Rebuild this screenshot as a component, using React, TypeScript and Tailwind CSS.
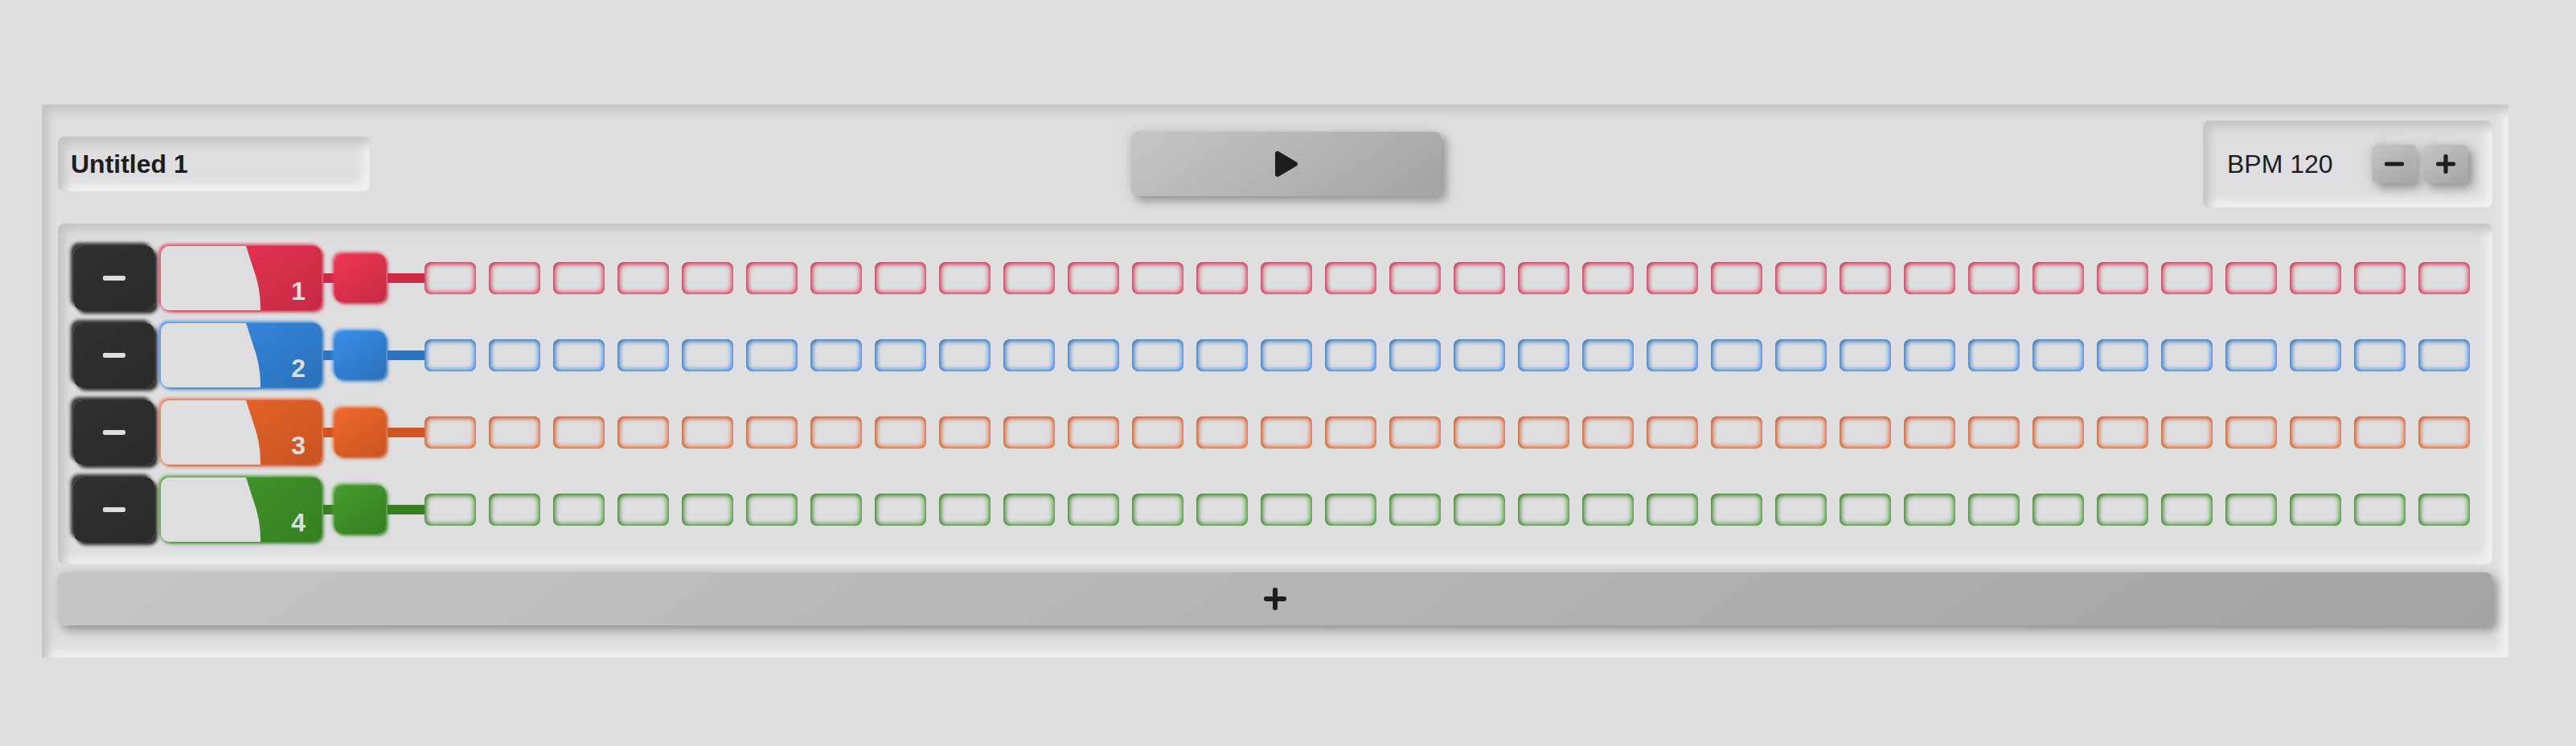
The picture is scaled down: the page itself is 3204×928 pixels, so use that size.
import { useState } from "react";

type Track = {
  id: number;
  raised: string;
  line: string;
  step: string;
};

const TRACKS: Track[] = [
  {
    id: 1,
    raised:
      "bg-linear-[145deg,#ee3655,#c62a45] shadow-[2px_2px_4px_#c42944,-2px_-2px_4px_#f23656]",
    line: "bg-[#cb2b47]",
    step: "shadow-[inset_2px_2px_6px_#be2a45,inset_-2px_-2px_6px_#f03a5e]",
  },
  {
    id: 2,
    raised:
      "bg-linear-[145deg,#388ee9,#2b71ba] shadow-[2px_2px_4px_#2a6eb5,-2px_-2px_4px_#3a92f2]",
    line: "bg-[#2c74c0]",
    step: "shadow-[inset_2px_2px_6px_#2a6eb5,inset_-2px_-2px_6px_#3a92f6]",
  },
  {
    id: 3,
    raised:
      "bg-linear-[145deg,#f0692b,#c95422] shadow-[2px_2px_4px_#c65322,-2px_-2px_4px_#f66c2c]",
    line: "bg-[#ce5623]",
    step: "shadow-[inset_2px_2px_6px_#c2501f,inset_-2px_-2px_6px_#f5692b]",
  },
  {
    id: 4,
    raised:
      "bg-linear-[145deg,#449c2c,#367e22] shadow-[2px_2px_4px_#357b22,-2px_-2px_4px_#45a02c]",
    line: "bg-[#388123]",
    step: "shadow-[inset_2px_2px_6px_#327820,inset_-2px_-2px_6px_#45a32c]",
  },
];

const STEP_COUNT = 32;
const INSET = "shadow-[inset_8px_8px_12px_#c4c4c6,inset_-8px_-8px_12px_#f3f3f5]";
const RAISED =
  "bg-linear-[145deg,#c6c4c7,#a4a3a5] shadow-[6px_6px_12px_#949495,-2px_-2px_16px_#cbc8cb]";

function MinusIcon({ className }: { className: string }) {
  return (
    <svg viewBox="0 0 28 28" className={className} fill="currentColor" aria-hidden="true">
      <rect x="0" y="11" width="28" height="6" rx="2" />
    </svg>
  );
}

function PlusIcon({ className }: { className: string }) {
  return (
    <svg viewBox="0 0 28 28" className={className} fill="currentColor" aria-hidden="true">
      <rect x="0" y="11" width="28" height="6" rx="2.4" />
      <rect x="11" y="0" width="6" height="28" rx="2.4" />
    </svg>
  );
}

function PlayIcon() {
  return (
    <svg viewBox="0 0 28 32" className="h-8 w-7" fill="currentColor" aria-hidden="true">
      <path d="M0 3C0 .7 2.500-.7 4.500.400L26.500 13.400C28.500 14.600 28.500 17.400 26.500 18.600L4.500 31.600C2.500 32.700 0 31.300 0 29Z" />
    </svg>
  );
}

function TrackRow({ track }: { track: Track }) {
  const [active, setActive] = useState<boolean[]>(() => Array(STEP_COUNT).fill(false));
  const toggle = (index: number) =>
    setActive((steps) => steps.map((on, i) => (i === index ? !on : on)));

  return (
    <li className="flex h-24 items-center">
      <button
        type="button"
        aria-label={`Remove track ${track.id}`}
        className="flex h-20 w-[100px] shrink-0 items-center justify-center rounded-[10px] bg-linear-[145deg,#313131,#292929] text-[#dedee0] shadow-[4px_4px_4px_#282828,-4px_-4px_4px_#323232]"
      >
        <MinusIcon className="size-7" />
      </button>
      <div
        className={`ml-2 flex h-20 w-[200px] shrink-0 items-end justify-between overflow-hidden rounded-[10px] ${track.raised}`}
      >
        <svg viewBox="0 0 124 80" className="h-20 w-[124px] text-[#dedee0]" fill="currentColor" aria-hidden="true">
          <path d="M0 0H106L118 37C122 50 124 64 124 80H0Z" />
        </svg>
        <span className="pr-5 pb-1.5 text-[32px] leading-9 font-bold text-[#dedee0]">{track.id}</span>
      </div>
      <div className={`ml-0.5 h-3 w-[14px] shrink-0 ${track.line}`} />
      <button
        type="button"
        aria-label={`Preview track ${track.id}`}
        className={`h-[60px] w-16 shrink-0 rounded-[10px] ${track.raised}`}
      />
      <div className={`ml-0.5 h-3 w-[46px] shrink-0 ${track.line}`} />
      <div className="grid flex-1 grid-cols-32 gap-4 pr-2">
        {active.map((on, i) => (
          <button
            key={i}
            type="button"
            aria-label={`Track ${track.id} step ${i + 1}`}
            aria-pressed={on}
            onClick={() => toggle(i)}
            className={`h-10 rounded-lg ${on ? track.raised : track.step}`}
          />
        ))}
      </div>
    </li>
  );
}

export default function App() {
  const [name, setName] = useState("Untitled 1");
  const [bpm, setBpm] = useState(120);

  return (
    <div className="min-h-screen bg-[#dedee0] pt-[130px] pr-[84px] pb-[110px] pl-[52px] font-['Liberation_Sans',Arial,sans-serif] text-[#1d1c1f]">
      <main className={`px-5 pt-5 pb-10 ${INSET}`}>
        <header className="flex items-center justify-between">
          <input
            type="text"
            aria-label="Pattern name"
            value={name}
            onChange={(event) => setName(event.target.value)}
            className={`h-[68px] w-[388px] rounded-lg bg-transparent px-4 text-[32px] font-bold outline-none ${INSET}`}
          />
          <button
            type="button"
            aria-label="Play"
            className={`flex h-20 w-[386px] items-center justify-center rounded-lg ${RAISED}`}
          >
            <PlayIcon />
          </button>
          <div className={`flex h-[108px] w-[360px] items-center justify-between rounded-lg px-[30px] ${INSET}`}>
            <span className="text-[32px]">BPM {bpm}</span>
            <div className="flex gap-2">
              <button
                type="button"
                aria-label="Decrease BPM"
                onClick={() => setBpm(bpm - 1)}
                className={`flex h-12 w-14 items-center justify-center rounded-lg ${RAISED}`}
              >
                <MinusIcon className="size-6" />
              </button>
              <button
                type="button"
                aria-label="Increase BPM"
                onClick={() => setBpm(bpm + 1)}
                className={`flex h-12 w-14 items-center justify-center rounded-lg ${RAISED}`}
              >
                <PlusIcon className="size-6" />
              </button>
            </div>
          </div>
        </header>
        <ul className={`mt-5 rounded-lg p-5 ${INSET}`}>
          {TRACKS.map((track) => (
            <TrackRow key={track.id} track={track} />
          ))}
        </ul>
        <button
          type="button"
          aria-label="Add track"
          className={`mt-[10px] flex h-[66px] w-full items-center justify-center rounded-lg ${RAISED}`}
        >
          <PlusIcon className="size-7" />
        </button>
      </main>
    </div>
  );
}
